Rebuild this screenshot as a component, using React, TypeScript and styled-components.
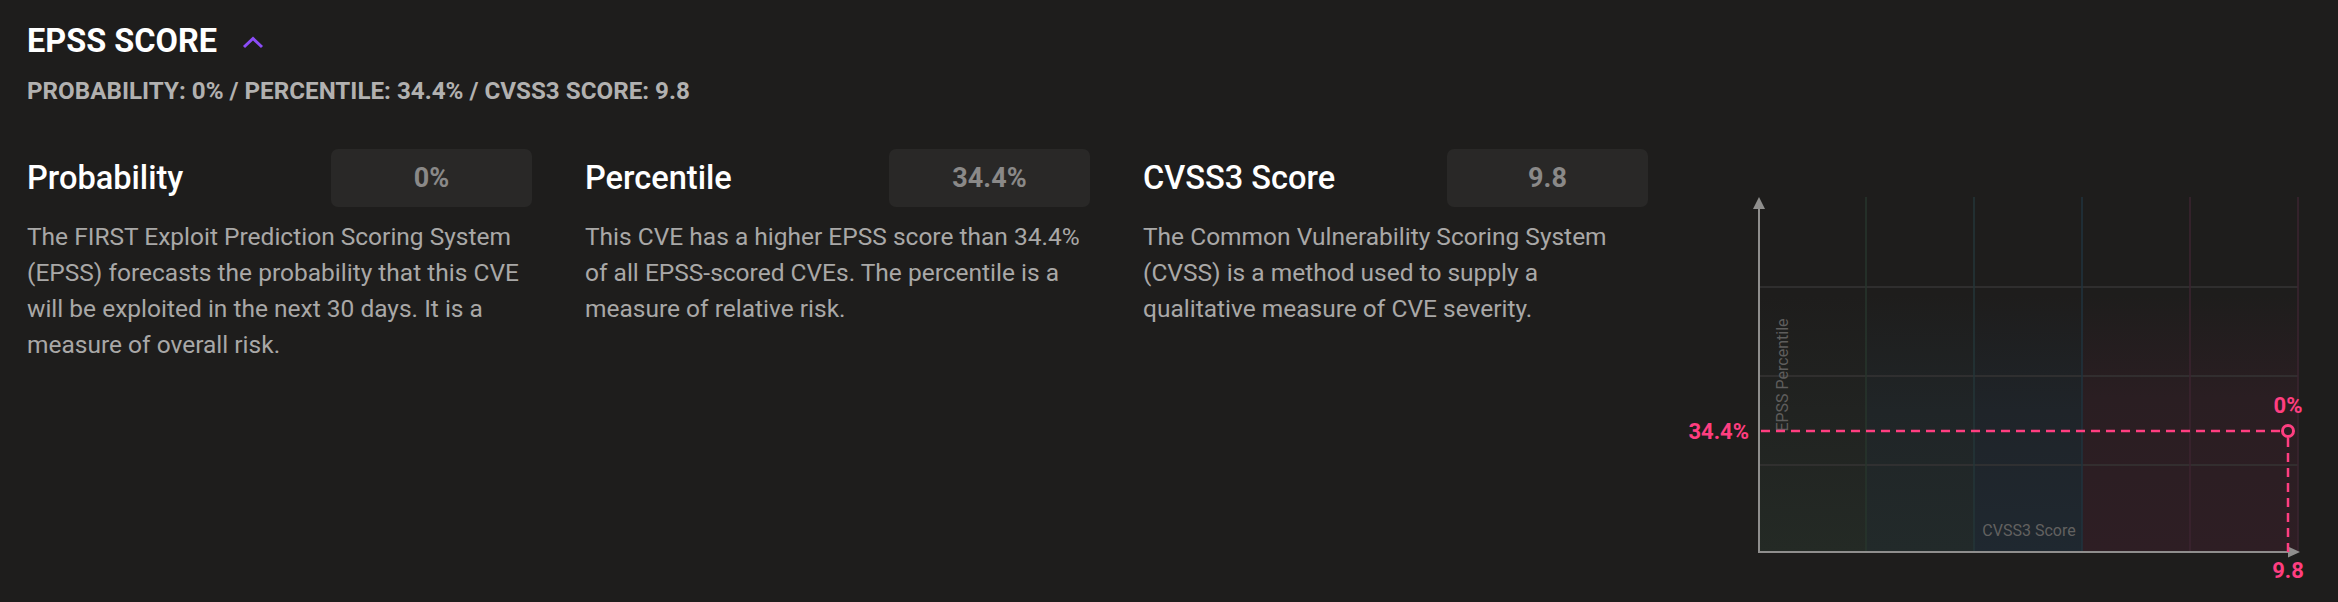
import React from "react";
import styled, { createGlobalStyle } from "styled-components";

const GlobalStyle = createGlobalStyle`
  html, body {
    margin: 0;
    background: #1e1d1c;
  }
  body {
    font-family: Roboto, "Noto Sans", "Liberation Sans", sans-serif;
    color: #ffffff;
  }
`;

type Metric = {
  title: string;
  value: string;
  text: string;
};

const metrics: Metric[] = [
  {
    title: "Probability",
    value: "0%",
    text:
      "The FIRST Exploit Prediction Scoring System (EPSS) forecasts the probability that this CVE will be exploited in the next 30 days. It is a measure of overall risk.",
  },
  {
    title: "Percentile",
    value: "34.4%",
    text:
      "This CVE has a higher EPSS score than 34.4% of all EPSS-scored CVEs. The percentile is a measure of relative risk.",
  },
  {
    title: "CVSS3 Score",
    value: "9.8",
    text:
      "The Common Vulnerability Scoring System (CVSS) is a method used to supply a qualitative measure of CVE severity.",
  },
];

// heatmap columns of the chart, in page pixels (the svg viewBox uses page coordinates)
const cells = [
  { x: 1759, w: 107, fill: "url(#hm-green)", line: "#27362c" },
  { x: 1866, w: 108, fill: "url(#hm-teal)", line: "#243639" },
  { x: 1974, w: 108, fill: "url(#hm-blue)", line: "#21333e" },
  { x: 2082, w: 108, fill: "url(#hm-red)", line: "#3c2530" },
  { x: 2190, w: 108, fill: "url(#hm-red)", line: "#3c2530" },
];

const PINK = "#ff3e80";

export default function App() {
  return (
    <>
      <GlobalStyle />
      <Page>
        <TitleRow>
          <Title>EPSS SCORE</Title>
          <Toggle aria-label="collapse">
            <svg width="22" height="14" viewBox="0 0 22 14">
              <path d="M2 12 L11 3.5 L20 12" fill="none" stroke="#8b4cf7" strokeWidth="3" />
            </svg>
          </Toggle>
        </TitleRow>
        <Summary>PROBABILITY: 0% / PERCENTILE: 34.4% / CVSS3 SCORE: 9.8</Summary>

        <Body>
          <Metrics>
            {metrics.map((m) => (
              <MetricColumn key={m.title}>
                <MetricHead>
                  <MetricTitle>{m.title}</MetricTitle>
                  <ValueBox>{m.value}</ValueBox>
                </MetricHead>
                <MetricText>{m.text}</MetricText>
              </MetricColumn>
            ))}
          </Metrics>

          <Chart width="640" height="440" viewBox="1678 150 640 440">
            <defs>
              <linearGradient id="hm-green" x1="0" y1="0" x2="0" y2="1">
                <stop offset="0" stopColor="#1e1d1c" />
                <stop offset="0.45" stopColor="#212321" />
                <stop offset="1" stopColor="#242a25" />
              </linearGradient>
              <linearGradient id="hm-teal" x1="0" y1="0" x2="0" y2="1">
                <stop offset="0" stopColor="#1e1d1c" />
                <stop offset="0.45" stopColor="#202527" />
                <stop offset="1" stopColor="#222a2a" />
              </linearGradient>
              <linearGradient id="hm-blue" x1="0" y1="0" x2="0" y2="1">
                <stop offset="0" stopColor="#1e1d1c" />
                <stop offset="0.45" stopColor="#1f2429" />
                <stop offset="1" stopColor="#1f2830" />
              </linearGradient>
              <linearGradient id="hm-red" x1="0" y1="0" x2="0" y2="1">
                <stop offset="0" stopColor="#1e1d1c" />
                <stop offset="0.4" stopColor="#2a1e22" />
                <stop offset="1" stopColor="#2e1e24" />
              </linearGradient>
            </defs>

            {cells.map((c) => (
              <rect key={c.x} x={c.x} y={296} width={c.w} height={257} fill={c.fill} />
            ))}

            {[288, 377, 466].map((y) => (
              <line key={y} x1={1759} x2={2298} y1={y} y2={y} stroke="#363534" strokeWidth="1.5" />
            ))}
            {cells.map((c) => (
              <line
                key={"v" + c.x}
                x1={c.x + c.w}
                x2={c.x + c.w}
                y1={198}
                y2={553}
                stroke={c.line}
                strokeWidth="1.5"
              />
            ))}

            <text
              x={1788}
              y={376}
              transform="rotate(-90 1788 376)"
              textAnchor="middle"
              fontSize="16"
              fill="#5e5d5c"
              fontFamily="Roboto, sans-serif"
            >
              EPSS Percentile
            </text>
            <text x={2029} y={537} textAnchor="middle" fontSize="16" fill="#626160" fontFamily="Roboto, sans-serif">
              CVSS3 Score
            </text>

            {/* axes */}
            <line x1={1759} x2={1759} y1={209} y2={554} stroke="#8f8e8d" strokeWidth="2" />
            <polygon points="1753,210 1765,210 1759,198" fill="#8f8e8d" />
            <line x1={1758} x2={2289} y1={553} y2={553} stroke="#8f8e8d" strokeWidth="2" />
            <polygon points="2288,547.5 2288,558.5 2300,553" fill="#8f8e8d" />

            {/* position marker */}
            <line x1={1761} x2={2281} y1={432} y2={432} stroke={PINK} strokeWidth="2.5" strokeDasharray="9 6" />
            <line x1={2288} x2={2288} y1={439} y2={553} stroke={PINK} strokeWidth="2.5" strokeDasharray="9 6" />
            <circle cx={2288} cy={432} r={5.5} fill="#2b1e23" stroke={PINK} strokeWidth="3" />

            <g fontFamily="Roboto, sans-serif" fontWeight="700" fontSize="22" fill={PINK}>
              <text x={1749} y={440} textAnchor="end">34.4%</text>
              <text x={2288} y={414} textAnchor="middle">0%</text>
              <text x={2288} y={579} textAnchor="middle">9.8</text>
            </g>
          </Chart>
        </Body>
      </Page>
    </>
  );
}

const Page = styled.main`
  padding: 22px 0 0 27px;
  min-height: 602px;
  box-sizing: border-box;
`;

const TitleRow = styled.div`
  display: flex;
  align-items: center;
  gap: 25px;
`;

const Title = styled.h2`
  margin: 0;
  font-size: 32.5px;
  line-height: 38px;
  font-weight: 700;
  color: #ffffff;
`;

const Toggle = styled.button`
  display: flex;
  padding: 0;
  border: 0;
  background: none;
  cursor: pointer;
  margin-top: 1px;
`;

const Summary = styled.div`
  margin-top: 16px;
  font-size: 24.2px;
  line-height: 30px;
  font-weight: 700;
  color: #b2b1b0;
`;

const Body = styled.section`
  display: flex;
  align-items: flex-start;
  margin-top: 43px;
`;

const Metrics = styled.div`
  display: grid;
  grid-template-columns: repeat(3, 505px);
  column-gap: 53px;
`;

const MetricColumn = styled.div`
  display: flex;
  flex-direction: column;
`;

const MetricHead = styled.div`
  display: flex;
  align-items: center;
  justify-content: space-between;
  height: 58px;
`;

const MetricTitle = styled.h3`
  margin: 0;
  font-size: 32.6px;
  line-height: 38px;
  font-weight: 500;
  color: #ffffff;
`;

const ValueBox = styled.div`
  width: 201px;
  height: 58px;
  border-radius: 7px;
  background: #292827;
  display: flex;
  align-items: center;
  justify-content: center;
  font-size: 27px;
  font-weight: 700;
  color: #8a8988;
`;

const MetricText = styled.p`
  margin: 12px 0 0;
  font-size: 24.5px;
  line-height: 36px;
  color: #a9a8a7;
`;

const Chart = styled.svg`
  display: block;
  flex: none;
  margin-left: 30px;
`;
